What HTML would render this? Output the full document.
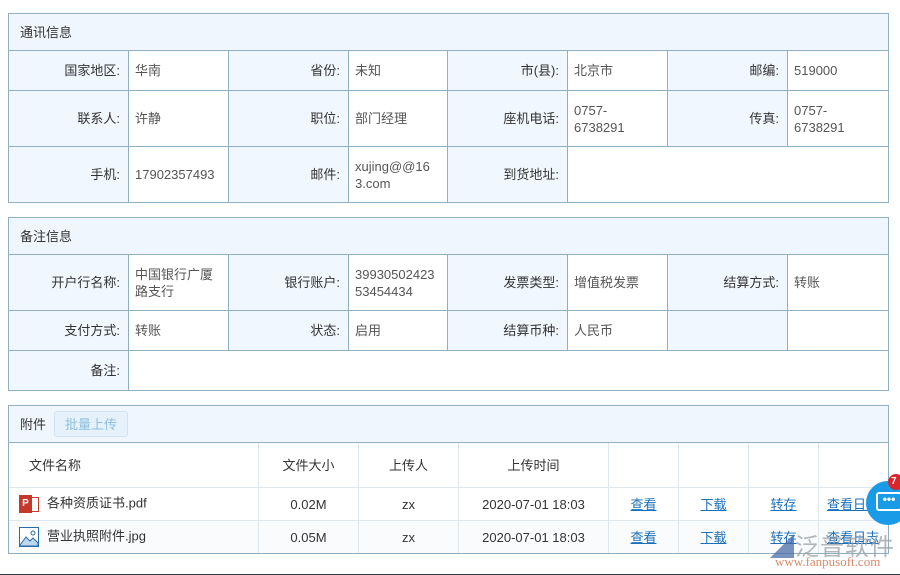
<!DOCTYPE html>
<html><head><meta charset="utf-8"><style>
*{margin:0;padding:0;box-sizing:border-box}
body{width:900px;height:575px;background:#fff;position:relative;overflow:hidden;font-family:"Liberation Sans","Noto Sans CJK SC",sans-serif;font-size:13px;color:#333}
table{border-collapse:collapse;position:absolute;left:8px;table-layout:fixed}
td{border:1px solid #8fb0c4;vertical-align:middle;line-height:17px}
td.h{background:#f0f6fd;padding-left:11px;color:#333}
td.l{background:#f0f7fe;text-align:right;padding-right:8px;color:#333}
td.v{background:#fff;padding-left:6px;color:#555;word-break:break-all}
.t2 td{border:1px solid #dfe6ec;text-align:center;color:#333}
.t2 td.hd{background:#f0f6fd;text-align:left;padding-left:11px;border-color:#8fb0c4}
.t2 .r2 td{background:#fafbfc}
a{color:#1a6fb9;text-decoration:underline}
.btn{display:inline-block;margin-left:8px;padding:0 10px;height:26px;line-height:26px;border:1px solid #cfe3f3;border-radius:3px;background:#e5f1fb;color:#8fbedf}
</style></head><body>
<table style="top:13px;width:880px">
<colgroup><col style="width:120px"><col style="width:100px"><col style="width:120px"><col style="width:99px"><col style="width:120px"><col style="width:100px"><col style="width:120px"><col style="width:101px"></colgroup>
<tr style="height:37px"><td class="h" colspan="8">通讯信息</td></tr>
<tr style="height:40px"><td class="l">国家地区:</td><td class="v">华南</td><td class="l">省份:</td><td class="v">未知</td><td class="l">市(县):</td><td class="v">北京市</td><td class="l">邮编:</td><td class="v">519000</td></tr>
<tr style="height:56px"><td class="l">联系人:</td><td class="v">许静</td><td class="l">职位:</td><td class="v">部门经理</td><td class="l">座机电话:</td><td class="v">0757-<br>6738291</td><td class="l">传真:</td><td class="v">0757-<br>6738291</td></tr>
<tr style="height:56px"><td class="l">手机:</td><td class="v">17902357493</td><td class="l">邮件:</td><td class="v">xujing@@16<br>3.com</td><td class="l">到货地址:</td><td class="v" colspan="3"></td></tr>
</table>
<table style="top:217px;width:880px">
<colgroup><col style="width:120px"><col style="width:100px"><col style="width:120px"><col style="width:99px"><col style="width:120px"><col style="width:100px"><col style="width:120px"><col style="width:101px"></colgroup>
<tr style="height:37px"><td class="h" colspan="8">备注信息</td></tr>
<tr style="height:56px"><td class="l">开户行名称:</td><td class="v">中国银行广厦<br>路支行</td><td class="l">银行账户:</td><td class="v">39930502423<br>53454434</td><td class="l">发票类型:</td><td class="v">增值税发票</td><td class="l">结算方式:</td><td class="v">转账</td></tr>
<tr style="height:40px"><td class="l">支付方式:</td><td class="v">转账</td><td class="l">状态:</td><td class="v">启用</td><td class="l">结算币种:</td><td class="v">人民币</td><td class="l"></td><td class="v"></td></tr>
<tr style="height:40px"><td class="l">备注:</td><td class="v" colspan="7"></td></tr>
</table>
<table class="t2" style="top:405px;width:880px">
<colgroup><col style="width:250px"><col style="width:100px"><col style="width:100px"><col style="width:150px"><col style="width:70px"><col style="width:70px"><col style="width:70px"><col style="width:70px"></colgroup>
<tr style="height:37px"><td class="hd" colspan="8">附件<span class="btn">批量上传</span></td></tr>
<tr style="height:45px"><td style="text-align:left;padding-left:20px">文件名称</td><td>文件大小</td><td>上传人</td><td>上传时间</td><td></td><td></td><td></td><td></td></tr>
<tr style="height:33px"><td style="text-align:left;padding-left:10px"><span style="display:inline-block;vertical-align:middle;width:20px;height:20px;position:relative;margin-right:8px"><span style="position:absolute;left:11px;top:3px;width:9px;height:15px;border:1px solid #c7382c;background:#fff"></span><span style="position:absolute;left:0;top:1px;width:13px;height:18px;background:#c7382c;color:#fff;font-size:10px;font-weight:bold;line-height:18px;text-align:center">P</span></span>各种资质证书.pdf</td><td>0.02M</td><td>zx</td><td>2020-07-01 18:03</td><td><a>查看</a></td><td><a>下载</a></td><td><a>转存</a></td><td style="text-align:left;padding-left:8px"><a>查看日志</a></td></tr>
<tr class="r2" style="height:33px"><td style="text-align:left;padding-left:10px"><svg width="20" height="20" viewBox="0 0 20 20" style="vertical-align:middle;margin-right:8px"><rect x="0.5" y="0.5" width="19" height="19" fill="#fff" stroke="#2b6aa8"/><path d="M1 18 L7 10 L11 14 L14 11 L19 16 L19 19 L1 19Z" fill="#bcd7f0" stroke="#2b6aa8"/><circle cx="14" cy="6" r="2" fill="none" stroke="#2b6aa8"/></svg>营业执照附件.jpg</td><td>0.05M</td><td>zx</td><td>2020-07-01 18:03</td><td><a>查看</a></td><td><a>下载</a></td><td><a>转存</a></td><td style="text-align:left;padding-left:8px"><a>查看日志</a></td></tr>
</table>
<div style="position:absolute;left:8px;top:405px;width:881px;height:149px;border:1px solid #8fb0c4"></div>
<div style="position:absolute;left:770px;top:527px;font-size:24px;color:#9aa0a6;opacity:.75;letter-spacing:1px"><span style="color:#4a6ea8">◢</span>泛普软件</div>
<div style="position:absolute;left:775px;top:554px;font-size:13px;color:#d98a6a;font-family:'Liberation Serif',serif">www.fanpusoft.com</div>
<div style="position:absolute;left:866px;top:481px;width:44px;height:44px;border-radius:50%;background:#1a9be8"></div>
<div style="position:absolute;left:876px;top:492px;width:26px;height:19px;border:2px solid #fff;border-radius:3px;color:#fff;font-size:12px;line-height:10px;text-align:center;font-weight:bold">•••</div>
<div style="position:absolute;left:888px;top:474px;width:16px;height:16px;border-radius:50%;background:#d9262b;color:#fff;font-size:10px;line-height:16px;padding-left:3px;font-weight:bold">7</div>
<div style="position:absolute;left:0;top:574px;width:900px;height:1px;background:#2e3b44"></div>
</body></html>
